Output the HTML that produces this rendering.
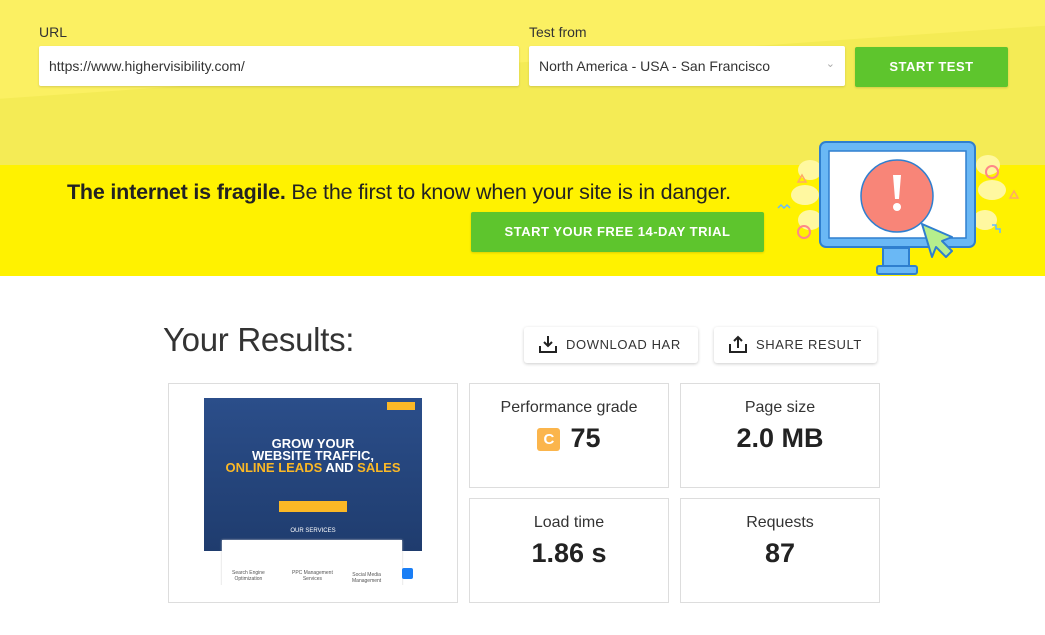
<!DOCTYPE html>
<html><head><meta charset="utf-8"><style>
*{box-sizing:border-box;margin:0;padding:0}
body{width:1045px;height:635px;overflow:hidden;background:#fff;font-family:"Liberation Sans",sans-serif;position:relative}
.top{position:absolute;left:0;top:0;width:1045px;height:165px;background:#f4eb55;overflow:hidden}
.top:before{content:"";position:absolute;left:-100px;top:-200px;width:1300px;height:260px;background:#fbf062;transform:rotate(-4deg)}
.lbl{position:absolute;top:24px;font-size:14px;color:#333}
.inp{position:absolute;top:46px;height:40px;background:#fff;border-radius:2px;box-shadow:0 1px 2px rgba(0,0,0,.15);font-size:14px;color:#333;padding:12px 10px}
.btn{position:absolute;background:#5ec52d;color:#fff;font-weight:bold;text-align:center;border-radius:2px;letter-spacing:.5px;box-shadow:0 1px 2px rgba(0,0,0,.15)}
.ban{position:absolute;left:0;top:165px;width:1045px;height:111px;background:#fff200}
.h1{position:absolute;left:163px;top:321px;font-size:33px;font-weight:300;color:#333;letter-spacing:-.3px}
.ob{position:absolute;top:327px;height:36px;background:#fff;border-radius:3px;box-shadow:0 1px 3px rgba(0,0,0,.2);font-size:13px;color:#333;letter-spacing:.6px;padding:10px 0 0 16px}
.ob svg{position:absolute;left:15px;top:8px}
.card{position:absolute;border:1px solid #ddd;background:#fff;text-align:center}
.card .t{font-size:16px;color:#333;margin-top:15px}
.card .v{font-size:27px;font-weight:bold;color:#222;margin-top:6px}
</style></head><body>
<div class="top">
<div class="lbl" style="left:39px">URL</div>
<div class="lbl" style="left:529px">Test from</div>
<div class="inp" style="left:39px;width:480px">https://www.highervisibility.com/</div>
<div class="inp" style="left:529px;width:316px">North America - USA - San Francisco<span style="position:absolute;right:10px;top:11px;color:#aaa;font-size:11px">&#8964;</span></div>
<div class="btn" style="left:855px;top:47px;width:153px;height:40px;font-size:13px;line-height:40px">START TEST</div>
</div>
<div class="ban">
<div style="position:absolute;left:67px;top:15px;font-size:21.5px;color:#222;white-space:nowrap;letter-spacing:-.2px"><b>The internet is fragile.</b> Be the first to know when your site is in danger.</div>
<div class="btn" style="left:471px;top:47px;width:293px;height:40px;font-size:13px;line-height:40px">START YOUR FREE 14-DAY TRIAL</div>
</div>
<svg style="position:absolute;left:770px;top:130px" width="275" height="146" viewBox="0 0 275 146">
<ellipse cx="40" cy="40" rx="12" ry="10" fill="#fff8a0"/><ellipse cx="35" cy="65" rx="14" ry="10" fill="#fff8a0"/><ellipse cx="40" cy="90" rx="12" ry="10" fill="#fff8a0"/>
<ellipse cx="218" cy="35" rx="12" ry="10" fill="#fff8a0"/><ellipse cx="222" cy="60" rx="14" ry="10" fill="#fff8a0"/><ellipse cx="215" cy="90" rx="12" ry="10" fill="#fff8a0"/>
<circle cx="34" cy="102" r="6" fill="none" stroke="#f88" stroke-width="2"/><circle cx="222" cy="42" r="6" fill="none" stroke="#f88" stroke-width="2"/>
<path d="M28 52l4-7 4 7z M240 68l4-7 4 7z" fill="none" stroke="#fa6" stroke-width="1.5"/>
<path d="M8 78l3-3 3 3 3-3 3 3" fill="none" stroke="#6bf" stroke-width="1.5"/>
<path d="M222 95l4 0 0 4 4 0 0 4" fill="none" stroke="#6bf" stroke-width="1.5"/>
<rect x="50" y="12" width="155" height="105" rx="6" fill="#6ab8f5" stroke="#2f7fcf" stroke-width="2"/>
<rect x="59" y="21" width="137" height="87" fill="#fff" stroke="#2f7fcf" stroke-width="1.5"/>
<rect x="113" y="118" width="26" height="18" fill="#6ab8f5" stroke="#2f7fcf" stroke-width="2"/>
<rect x="107" y="136" width="40" height="8" rx="2" fill="#6ab8f5" stroke="#2f7fcf" stroke-width="2"/>
<circle cx="127" cy="66" r="36" fill="#f88578" stroke="#2f7fcf" stroke-width="1.5"/>
<path d="M123 45h8l-2 24h-4z" fill="#fff"/><circle cx="127" cy="77" r="4" fill="#fff"/>
<path d="M152 94l30 13-10 4 10 10-6 6-10-10-4 10z" fill="#b6ee8c" stroke="#2f7fcf" stroke-width="2" stroke-linejoin="round"/>
</svg>
<div class="h1">Your Results:</div>
<div class="ob" style="left:524px;width:174px;padding-left:42px"><svg width="18" height="18" viewBox="0 0 18 18"><path d="M1 11v6h16v-6M9 1v10M5 7l4 4 4-4" fill="none" stroke="#222" stroke-width="2"/></svg>DOWNLOAD HAR</div>
<div class="ob" style="left:714px;width:163px;padding-left:42px"><svg width="18" height="18" viewBox="0 0 18 18"><path d="M1 9v8h16v-8M9 13V2M5 6l4-4 4 4" fill="none" stroke="#222" stroke-width="2"/></svg>SHARE RESULT</div>
<div class="card" style="left:168px;top:383px;width:290px;height:220px">
<div style="position:absolute;left:35px;top:14px;width:218px;height:187px;background:#fff;overflow:hidden">
<div style="position:absolute;left:0;top:0;width:218px;height:153px;background:linear-gradient(#2b4e8a,#1f3c6e)"></div>
<div style="position:absolute;left:0;top:40px;width:218px;text-align:center;color:#fff;font-weight:bold;font-size:13px;line-height:12px">GROW YOUR<br>WEBSITE TRAFFIC,<br><span style="color:#fbb826">ONLINE LEADS</span> AND <span style="color:#fbb826">SALES</span></div>
<div style="position:absolute;left:75px;top:103px;width:68px;height:11px;background:#fbb826"></div>
<div style="position:absolute;left:183px;top:4px;width:28px;height:8px;background:#fbb826"></div>
<div style="position:absolute;left:0;top:130px;width:218px;text-align:center;color:#fff;font-size:6px">OUR SERVICES</div>
<div style="position:absolute;left:18px;top:142px;width:180px;height:50px;background:#fff;box-shadow:0 0 2px #ccc;font-size:5px;color:#555">
<span style="position:absolute;left:10px;top:30px">Search Engine<br>Optimization</span><span style="position:absolute;left:70px;top:30px">PPC Management<br>Services</span><span style="position:absolute;left:130px;top:32px">Social Media<br>Management</span></div>
<div style="position:absolute;left:198px;top:170px;width:11px;height:11px;background:#1a7ef5;border-radius:2px"></div>
</div></div>
<div class="card" style="left:469px;top:383px;width:200px;height:105px"><div class="t">Performance grade</div><div class="v"><span style="display:inline-block;width:23px;height:23px;background:#fbb54c;border-radius:3px;color:#fff;font-size:15px;line-height:23px;vertical-align:3px;margin-right:10px">C</span>75</div></div>
<div class="card" style="left:680px;top:383px;width:200px;height:105px"><div class="t">Page size</div><div class="v">2.0 MB</div></div>
<div class="card" style="left:469px;top:498px;width:200px;height:105px"><div class="t">Load time</div><div class="v">1.86 s</div></div>
<div class="card" style="left:680px;top:498px;width:200px;height:105px"><div class="t">Requests</div><div class="v">87</div></div>
</body></html>
